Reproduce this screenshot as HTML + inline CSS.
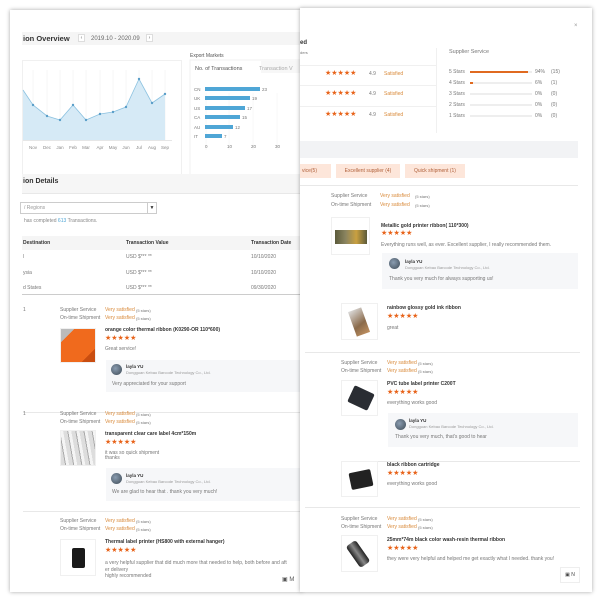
<!DOCTYPE html>
<html><head><meta charset="utf-8"><style>
*{margin:0;padding:0;box-sizing:border-box}
body{width:602px;height:602px;background:#fff;position:relative;overflow:hidden;font-family:"Liberation Sans",sans-serif;color:#666}
.a{position:absolute;white-space:nowrap;line-height:1}
.card{position:absolute;background:#fff;box-shadow:0 0 4px rgba(0,0,0,.35);overflow:hidden}
.t{font-size:5px;color:#777}
.b{font-weight:bold;color:#333}
.o{color:#d98a3a}
.st{color:#e8641b;font-size:7px;letter-spacing:0}
.reply{position:absolute;background:#f6f7f9}
.av{position:absolute;width:11px;height:11px;border-radius:50%;background:radial-gradient(circle at 40% 40%,#8a9cb0,#3d4a55)}
.line{position:absolute;height:1px;background:#e8e8e8}
.img{position:absolute;background:#fafafa;border:1px solid #f0f0f0}
</style></head><body>

<!-- LEFT CARD -->
<div class="card" style="left:10px;top:10px;width:292px;height:582px"></div>
<div style="position:absolute;left:10px;top:10px;width:292px;height:582px;overflow:hidden">
 <div style="position:absolute;left:12px;top:22px;width:280px;height:13px;background:#f5f5f5"></div>
 <div class="a b" style="left:13px;top:25px;font-size:7.5px">ion Overview</div>
 <div class="a" style="left:68px;top:24px;width:7px;height:8px;background:#fff;border:1px solid #ddd;font-size:5px;text-align:center;line-height:6px">‹</div>
 <div class="a t" style="left:81px;top:26px;font-size:6px;color:#666">2019.10 - 2020.09</div>
 <div class="a" style="left:136px;top:24px;width:7px;height:8px;background:#fff;border:1px solid #ddd;font-size:5px;text-align:center;line-height:6px">›</div>

 <div style="position:absolute;left:12px;top:50px;width:160px;height:116px;border:1px solid #f0f0f0"></div>
 <svg style="position:absolute;left:0;top:0" width="292" height="200">
  <g stroke="#eee" stroke-width="0.5">
   <line x1="23" y1="60" x2="23" y2="130"/><line x1="37" y1="60" x2="37" y2="130"/><line x1="50" y1="60" x2="50" y2="130"/><line x1="63" y1="60" x2="63" y2="130"/><line x1="76" y1="60" x2="76" y2="130"/><line x1="90" y1="60" x2="90" y2="130"/><line x1="103" y1="60" x2="103" y2="130"/><line x1="116" y1="60" x2="116" y2="130"/><line x1="129" y1="60" x2="129" y2="130"/><line x1="142" y1="60" x2="142" y2="130"/><line x1="155" y1="60" x2="155" y2="130"/>
  </g>
  <polygon fill="#d6eaf6" points="13,80 23,95 37,106 50,110 63,95 76,110 90,104 103,102 116,97 129,69 142,93 155,84 155,130 13,130"/>
  <polyline fill="none" stroke="#8cc2e0" stroke-width="0.8" points="13,80 23,95 37,106 50,110 63,95 76,110 90,104 103,102 116,97 129,69 142,93 155,84"/>
  <g fill="#5a9ec8"><circle cx="23" cy="95" r="1.2"/><circle cx="37" cy="106" r="1.2"/><circle cx="50" cy="110" r="1.2"/><circle cx="63" cy="95" r="1.2"/><circle cx="76" cy="110" r="1.2"/><circle cx="90" cy="104" r="1.2"/><circle cx="103" cy="102" r="1.2"/><circle cx="116" cy="97" r="1.2"/><circle cx="129" cy="69" r="1.2"/><circle cx="142" cy="93" r="1.2"/><circle cx="155" cy="84" r="1.2"/></g>
  <line x1="13" y1="130.5" x2="162" y2="130.5" stroke="#ccc" stroke-width="0.5"/>
  <g font-size="4.5" fill="#888" font-family="Liberation Sans" text-anchor="middle">
   <text x="23" y="139">Nov</text><text x="37" y="139">Dec</text><text x="50" y="139">Jan</text><text x="63" y="139">Feb</text><text x="76" y="139">Mar</text><text x="90" y="139">Apr</text><text x="103" y="139">May</text><text x="116" y="139">Jun</text><text x="129" y="139">Jul</text><text x="142" y="139">Aug</text><text x="155" y="139">Sep</text>
  </g>
  <rect x="180" y="50" width="112" height="116" fill="none" stroke="#f0f0f0"/>
  <rect x="181" y="51" width="70" height="12" fill="#fff"/>
  <rect x="251" y="51" width="41" height="12" fill="#f7f7f7"/>
  <g stroke="#f0f0f0" stroke-width="0.5"><line x1="196" y1="83" x2="196" y2="140"/><line x1="219" y1="83" x2="219" y2="140"/><line x1="243" y1="83" x2="243" y2="140"/><line x1="267" y1="83" x2="267" y2="140"/></g>
  <g fill="#4fa6d6">
   <rect x="195" y="77" width="55" height="4"/><rect x="195" y="86" width="45" height="4"/><rect x="195" y="96" width="40" height="4"/><rect x="195" y="105" width="35" height="4"/><rect x="195" y="115" width="28" height="4"/><rect x="195" y="124" width="17" height="4"/>
  </g>
  <g font-size="4.5" fill="#777" font-family="Liberation Sans">
   <text x="184" y="81">CN</text><text x="184" y="90">UK</text><text x="184" y="100">US</text><text x="184" y="109">CA</text><text x="184" y="119">AU</text><text x="184" y="128">IT</text>
   <text x="252" y="81">23</text><text x="242" y="90">19</text><text x="237" y="100">17</text><text x="232" y="109">15</text><text x="225" y="119">12</text><text x="214" y="128">7</text>
   <text x="195" y="138">0</text><text x="217" y="138">10</text><text x="241" y="138">20</text><text x="265" y="138">30</text>
  </g>
 </svg>
 <div class="a t" style="left:180px;top:44px;font-size:5px;color:#555">Export Markets</div>
 <div class="a" style="left:185px;top:57px;font-size:5.5px;color:#555">No. of Transactions</div>
 <div class="a" style="left:249px;top:57px;font-size:5.5px;color:#aaa">Transaction V</div>

 <div style="position:absolute;left:12px;top:164px;width:280px;height:19px;background:#f6f6f6"></div>
 <div class="a b" style="left:13px;top:168px;font-size:7px">ion Details</div>
 <div class="line" style="left:12px;top:183px;width:280px"></div>
 <div style="position:absolute;left:10px;top:192px;width:137px;height:12px;border:1px solid #ccc"></div>
 <div style="position:absolute;left:137px;top:192px;width:10px;height:12px;border:1px solid #ccc;font-size:5px;text-align:center;line-height:10px;color:#333">▼</div>
 <div class="a t" style="left:14px;top:196px;font-size:5px;color:#999">/ Regions</div>
 <div class="a t" style="left:14px;top:209px;font-size:5px;color:#888">has completed <span style="color:#4fa6d6">613</span> Transactions.</div>
 <div style="position:absolute;left:12px;top:226px;width:280px;height:14px;background:#f5f5f5"></div>
 <div class="a b" style="left:13px;top:231px;font-size:5px">Destination</div>
 <div class="a b" style="left:116px;top:231px;font-size:5px">Transaction Value</div>
 <div class="a b" style="left:241px;top:231px;font-size:5px">Transaction Date</div>
 <div class="a t" style="left:13px;top:245px">l</div><div class="a t" style="left:116px;top:245px">USD $*** **</div><div class="a t" style="left:241px;top:245px">10/10/2020</div>
 <div class="a t" style="left:13px;top:261px">ysia</div><div class="a t" style="left:116px;top:261px">USD $*** **</div><div class="a t" style="left:241px;top:261px">10/10/2020</div>
 <div class="a t" style="left:13px;top:276px">d States</div><div class="a t" style="left:116px;top:276px">USD $*** **</div><div class="a t" style="left:241px;top:276px">09/30/2020</div>
 <div class="line" style="left:12px;top:284px;width:280px;background:#ccc"></div>

 <div class="a t" style="left:13px;top:298px">1</div>
 <div class="a t" style="left:50px;top:298px">Supplier Service</div><div class="a t o" style="left:95px;top:298px">Very satisfied</div><div class="a t" style="left:126px;top:299px;font-size:4px">(5 stars)</div>
 <div class="a t" style="left:50px;top:306px">On-time Shipment</div><div class="a t o" style="left:95px;top:306px">Very satisfied</div><div class="a t" style="left:126px;top:307px;font-size:4px">(5 stars)</div>
 <div class="img" style="left:50px;top:318px;width:36px;height:35px;background:linear-gradient(135deg,#bbb 0 20%,#f06a1d 20% 80%,#c94d10 80%)"></div>
 <div class="a b" style="left:95px;top:318px;font-size:5px">orange color thermal ribbon (K0290-OR 110*600)</div>
 <div class="a st" style="left:95px;top:325px">★★★★★</div>
 <div class="a t" style="left:95px;top:337px">Great service!</div>
 <div class="reply" style="left:96px;top:350px;width:196px;height:32px"></div>
 <div class="av" style="left:101px;top:354px"></div>
 <div class="a b" style="left:116px;top:355px;font-size:4.5px">layla YU</div>
 <div class="a t" style="left:116px;top:361px;font-size:4px;color:#999">Dongguan Kebao Barcode Technology Co., Ltd.</div>
 <div class="a t" style="left:102px;top:372px">Very appreciated for your support</div>
 <div class="line" style="left:13px;top:402px;width:280px"></div>

 <div class="a t" style="left:13px;top:402px">1</div>
 <div class="a t" style="left:50px;top:402px">Supplier Service</div><div class="a t o" style="left:95px;top:402px">Very satisfied</div><div class="a t" style="left:126px;top:403px;font-size:4px">(5 stars)</div>
 <div class="a t" style="left:50px;top:410px">On-time Shipment</div><div class="a t o" style="left:95px;top:410px">Very satisfied</div><div class="a t" style="left:126px;top:411px;font-size:4px">(5 stars)</div>
 <div class="img" style="left:50px;top:420px;width:36px;height:36px;background:repeating-linear-gradient(80deg,#ddd 0 4px,#aaa 4px 5px,#f4f4f4 5px 8px)"></div>
 <div class="a b" style="left:95px;top:422px;font-size:5px">transparent clear care label 4cm*150m</div>
 <div class="a st" style="left:95px;top:429px">★★★★★</div>
 <div class="a t" style="left:95px;top:441px">it was so quick shipment<br>thanks</div>
 <div class="reply" style="left:96px;top:458px;width:196px;height:33px"></div>
 <div class="av" style="left:101px;top:463px"></div>
 <div class="a b" style="left:116px;top:464px;font-size:4.5px">layla YU</div>
 <div class="a t" style="left:116px;top:470px;font-size:4px;color:#999">Dongguan Kebao Barcode Technology Co., Ltd.</div>
 <div class="a t" style="left:102px;top:480px">We are glad to hear that . thank you very much!</div>
 <div class="line" style="left:13px;top:501px;width:280px"></div>

 <div class="a t" style="left:50px;top:509px">Supplier Service</div><div class="a t o" style="left:95px;top:509px">Very satisfied</div><div class="a t" style="left:126px;top:510px;font-size:4px">(5 stars)</div>
 <div class="a t" style="left:50px;top:517px">On-time Shipment</div><div class="a t o" style="left:95px;top:517px">Very satisfied</div><div class="a t" style="left:126px;top:518px;font-size:4px">(5 stars)</div>
 <div class="img" style="left:50px;top:529px;width:36px;height:37px;background:#fff"><div style="position:absolute;left:11px;top:8px;width:13px;height:20px;background:#1a1a1a;border-radius:2px"></div></div>
 <div class="a b" style="left:95px;top:530px;font-size:5px">Thermal label printer (HS800 with external hanger)</div>
 <div class="a st" style="left:95px;top:537px">★★★★★</div>
 <div class="a t" style="left:95px;top:550px;line-height:1.3">a very helpful supplier that did much more that needed to help, both before and aft<br>er delivery<br>highly recommended</div>
 <div class="a" style="left:272px;top:567px;font-size:6px;color:#555">▣ M</div>
</div>

<!-- RIGHT CARD -->
<div class="card" style="left:300px;top:8px;width:292px;height:584px"></div>
<div style="position:absolute;left:300px;top:8px;width:292px;height:584px;overflow:hidden">
 <div class="a" style="left:274px;top:15px;font-size:6px;color:#999">×</div>
 <div class="a b" style="left:0;top:32px;font-size:6px">ed</div>
 <div class="a t" style="left:0;top:43px;font-size:4px">ders</div>
 <div class="line" style="left:0;top:57px;width:136px;background:#f0f0f0"></div>
 <div class="line" style="left:0;top:77px;width:136px;background:#f0f0f0"></div>
 <div class="line" style="left:0;top:98px;width:136px;background:#f0f0f0"></div>
 <div style="position:absolute;left:136px;top:40px;width:1px;height:85px;background:#f0f0f0"></div>
 <div class="a st" style="left:25px;top:62px">★★★★★</div><div class="a t" style="left:69px;top:64px">4.9</div><div class="a t o" style="left:84px;top:64px">Satisfied</div>
 <div class="a st" style="left:25px;top:82px">★★★★★</div><div class="a t" style="left:69px;top:84px">4.9</div><div class="a t o" style="left:84px;top:84px">Satisfied</div>
 <div class="a st" style="left:25px;top:103px">★★★★★</div><div class="a t" style="left:69px;top:105px">4.9</div><div class="a t o" style="left:84px;top:105px">Satisfied</div>

 <div class="a t" style="left:149px;top:42px;font-size:5.5px">Supplier Service</div>
 <div class="a t" style="left:149px;top:62px">5 Stars</div><div style="position:absolute;left:170px;top:63px;width:62px;height:2px;background:#eee"><div style="width:58px;height:2px;background:#e06a20"></div></div><div class="a t" style="left:235px;top:62px">94%</div><div class="a t" style="left:251px;top:62px">(15)</div>
 <div class="a t" style="left:149px;top:73px">4 Stars</div><div style="position:absolute;left:170px;top:74px;width:62px;height:2px;background:#eee"><div style="width:3px;height:2px;background:#e06a20"></div></div><div class="a t" style="left:235px;top:73px">6%</div><div class="a t" style="left:251px;top:73px">(1)</div>
 <div class="a t" style="left:149px;top:84px">3 Stars</div><div style="position:absolute;left:170px;top:85px;width:62px;height:2px;background:#eee"></div><div class="a t" style="left:235px;top:84px">0%</div><div class="a t" style="left:251px;top:84px">(0)</div>
 <div class="a t" style="left:149px;top:95px">2 Stars</div><div style="position:absolute;left:170px;top:96px;width:62px;height:2px;background:#eee"></div><div class="a t" style="left:235px;top:95px">0%</div><div class="a t" style="left:251px;top:95px">(0)</div>
 <div class="a t" style="left:149px;top:106px">1 Stars</div><div style="position:absolute;left:170px;top:107px;width:62px;height:2px;background:#eee"></div><div class="a t" style="left:235px;top:106px">0%</div><div class="a t" style="left:251px;top:106px">(0)</div>

 <div style="position:absolute;left:0;top:133px;width:278px;height:17px;background:#f2f3f5"></div>
 <div class="a" style="left:0;top:156px;width:31px;height:14px;background:#fde6da;font-size:5px;color:#b0603a;line-height:14px;padding-left:2px">vice(5)</div>
 <div class="a" style="left:36px;top:156px;width:64px;height:14px;background:#fde6da;font-size:5px;color:#b0603a;line-height:14px;text-align:center">Excellent supplier (4)</div>
 <div class="a" style="left:105px;top:156px;width:60px;height:14px;background:#fde6da;font-size:5px;color:#b0603a;line-height:14px;text-align:center">Quick shipment (1)</div>
 <div class="line" style="left:0;top:177px;width:278px"></div>

 <div class="a t" style="left:31px;top:186px">Supplier Service</div><div class="a t o" style="left:80px;top:186px">Very satisfied</div><div class="a t" style="left:115px;top:187px;font-size:4px">(5 stars)</div>
 <div class="a t" style="left:31px;top:195px">On-time Shipment</div><div class="a t o" style="left:80px;top:195px">Very satisfied</div><div class="a t" style="left:115px;top:196px;font-size:4px">(5 stars)</div>
 <div class="img" style="left:31px;top:209px;width:39px;height:38px;background:#fff"><div style="position:absolute;left:3px;top:12px;width:32px;height:14px;background:linear-gradient(90deg,#5b5a3a,#8a8460,#c9a040,#5b5a3a)"></div></div>
 <div class="a b" style="left:81px;top:216px;font-size:5px">Metallic gold printer ribbon( 110*300)</div>
 <div class="a st" style="left:81px;top:222px">★★★★★</div>
 <div class="a t" style="left:81px;top:235px">Everything runs well, as ever. Excellent supplier, I really recommended them.</div>
 <div class="reply" style="left:82px;top:245px;width:196px;height:36px"></div>
 <div class="av" style="left:89px;top:250px"></div>
 <div class="a b" style="left:105px;top:252px;font-size:4.5px">layla YU</div>
 <div class="a t" style="left:105px;top:258px;font-size:4px;color:#999">Dongguan Kebao Barcode Technology Co., Ltd.</div>
 <div class="a t" style="left:89px;top:269px">Thank you very much for always supporting us!</div>

 <div class="img" style="left:41px;top:295px;width:37px;height:37px;background:#fff"><div style="position:absolute;left:10px;top:5px;width:14px;height:26px;background:linear-gradient(160deg,#ddd,#8a6a4a 60%,#c09060);transform:rotate(-20deg)"></div></div>
 <div class="a b" style="left:87px;top:298px;font-size:5px">rainbow glossy gold ink ribbon</div>
 <div class="a st" style="left:87px;top:305px">★★★★★</div>
 <div class="a t" style="left:87px;top:318px">great</div>
 <div class="line" style="left:5px;top:344px;width:275px"></div>

 <div class="a t" style="left:41px;top:353px">Supplier Service</div><div class="a t o" style="left:87px;top:353px">Very satisfied</div><div class="a t" style="left:118px;top:354px;font-size:4px">(5 stars)</div>
 <div class="a t" style="left:41px;top:361px">On-time Shipment</div><div class="a t o" style="left:87px;top:361px">Very satisfied</div><div class="a t" style="left:118px;top:362px;font-size:4px">(5 stars)</div>
 <div class="img" style="left:41px;top:372px;width:37px;height:36px;background:#fff"><div style="position:absolute;left:8px;top:8px;width:22px;height:18px;background:#2a2d33;transform:rotate(25deg);border-radius:2px"></div></div>
 <div class="a b" style="left:87px;top:374px;font-size:5px">PVC tube label printer C200T</div>
 <div class="a st" style="left:87px;top:381px">★★★★★</div>
 <div class="a t" style="left:87px;top:393px">everything works good</div>
 <div class="reply" style="left:88px;top:405px;width:190px;height:34px"></div>
 <div class="av" style="left:95px;top:411px"></div>
 <div class="a b" style="left:109px;top:411px;font-size:4.5px">layla YU</div>
 <div class="a t" style="left:109px;top:417px;font-size:4px;color:#999">Dongguan Kebao Barcode Technology Co., Ltd.</div>
 <div class="a t" style="left:95px;top:427px">Thank you very much, that's good to hear</div>
 <div class="line" style="left:41px;top:453px;width:239px"></div>

 <div class="img" style="left:41px;top:453px;width:37px;height:36px;background:#fff"><div style="position:absolute;left:8px;top:9px;width:22px;height:17px;background:#222;transform:rotate(-12deg);border-radius:2px"></div></div>
 <div class="a b" style="left:87px;top:455px;font-size:5px">black ribbon cartridge</div>
 <div class="a st" style="left:87px;top:462px">★★★★★</div>
 <div class="a t" style="left:87px;top:474px">everything works good</div>
 <div class="line" style="left:5px;top:499px;width:275px"></div>

 <div class="a t" style="left:41px;top:509px">Supplier Service</div><div class="a t o" style="left:87px;top:509px">Very satisfied</div><div class="a t" style="left:118px;top:510px;font-size:4px">(5 stars)</div>
 <div class="a t" style="left:41px;top:517px">On-time Shipment</div><div class="a t o" style="left:87px;top:517px">Very satisfied</div><div class="a t" style="left:118px;top:518px;font-size:4px">(5 stars)</div>
 <div class="img" style="left:41px;top:527px;width:37px;height:37px;background:#fff"><div style="position:absolute;left:10px;top:5px;width:12px;height:26px;background:linear-gradient(90deg,#222,#888,#222);transform:rotate(-35deg);border-radius:3px"></div></div>
 <div class="a b" style="left:87px;top:530px;font-size:5px">25mm*74m black color wash-resin thermal ribbon</div>
 <div class="a st" style="left:87px;top:537px">★★★★★</div>
 <div class="a t" style="left:87px;top:549px">they were very helpful and helped me get exactly what I needed. thank you!</div>
 <div style="position:absolute;left:260px;top:559px;width:20px;height:16px;border:1px solid #eee;font-size:5px;color:#444;text-align:center;line-height:14px">▣ N</div>
</div>
</body></html>
